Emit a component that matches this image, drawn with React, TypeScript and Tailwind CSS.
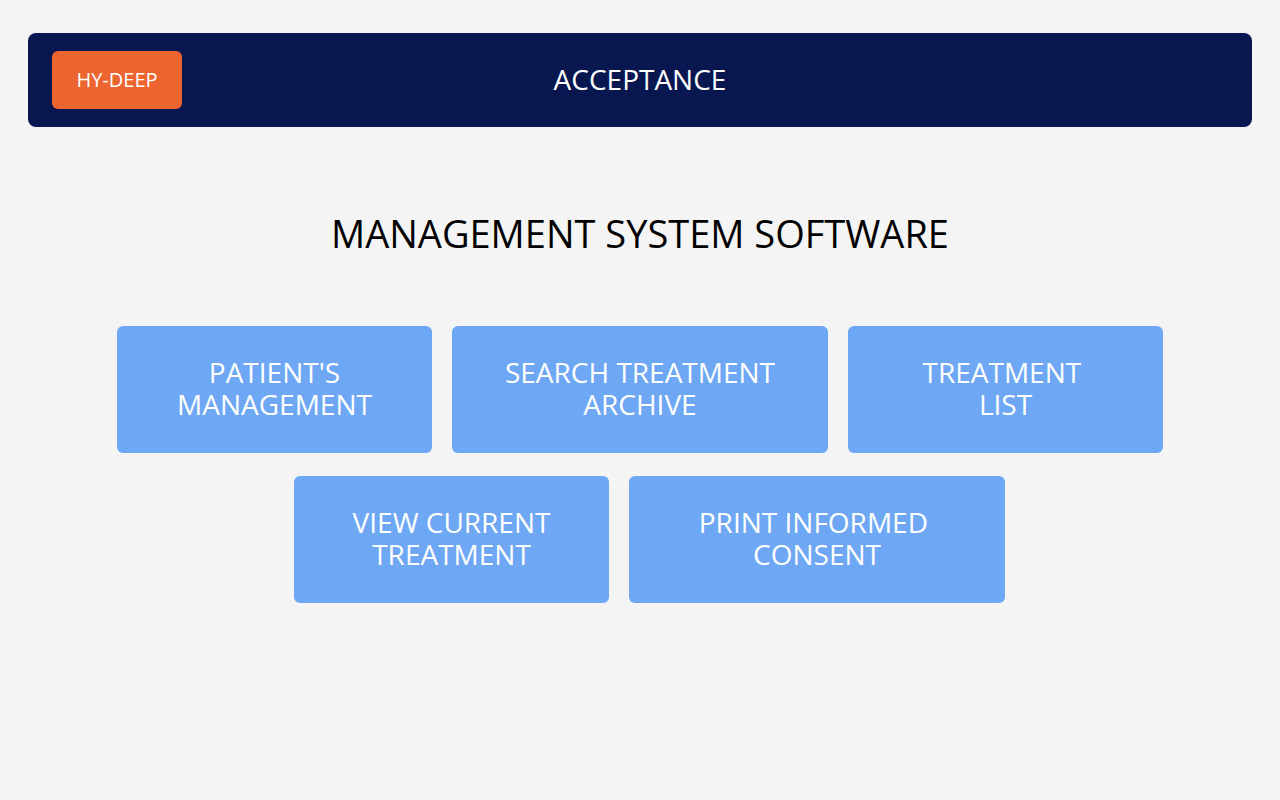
import React from "react";

const Tile = ({ w, lines }: { w: string; lines: string[] }) => (
  <button
    className={`${w} h-[127px] rounded-[6px] bg-[#6ea7f4] text-white text-[28px] leading-[32px] flex flex-col items-center justify-center pb-[4px]`}
  >
    {lines.map((l) => (
      <span key={l} className="whitespace-pre">{l}</span>
    ))}
  </button>
);

export default function App() {
  return (
    <div
      className="min-h-[800px] w-full bg-[#f4f4f4] pt-[33px]"
      style={{ fontFamily: '"Open Sans", "Noto Sans", sans-serif' }}
    >
      <header className="mx-[28px] h-[94px] rounded-[8px] bg-[#081750] relative flex items-center justify-center">
        <button className="absolute left-[24px] top-[18px] w-[130px] h-[58px] rounded-[6px] bg-[#ec6430] text-white text-[20px] flex items-center justify-center">
          HY-DEEP
        </button>
        <h1 className="text-white text-[28px] leading-[32px] pb-[2px]">ACCEPTANCE</h1>
      </header>

      <h2 className="mt-[82px] text-center text-black text-[38px] leading-[48px]">
        MANAGEMENT SYSTEM SOFTWARE
      </h2>

      <div className="mt-[69px] flex flex-col gap-[23px]">
        <div className="flex justify-center gap-[20px]">
          <Tile w="w-[315px]" lines={["PATIENT'S", "MANAGEMENT"]} />
          <Tile w="w-[376px]" lines={["SEARCH TREATMENT", "ARCHIVE"]} />
          <Tile w="w-[315px]" lines={["TREATMENT\u00a0", "LIST"]} />
        </div>
        <div className="flex justify-center gap-[20px] pl-[19px]">
          <Tile w="w-[315px]" lines={["VIEW CURRENT", "TREATMENT"]} />
          <Tile w="w-[376px]" lines={["PRINT INFORMED\u00a0", "CONSENT"]} />
        </div>
      </div>
    </div>
  );
}
